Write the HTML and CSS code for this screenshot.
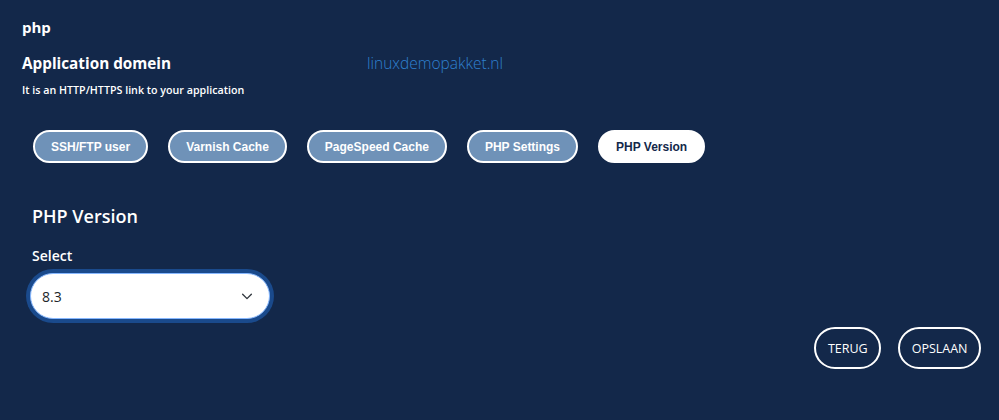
FILE: index.html
```html
<!DOCTYPE html>
<html lang="nl">
<head>
<meta charset="utf-8">
<title>php</title>
<link rel="stylesheet" href="styles.css">
</head>
<body>
<main class="page">
  <h1 class="app-name">php</h1>

  <div class="domain-row">
    <div class="domain-label">
      <h2 class="domain-title">Application domein</h2>
      <p class="domain-hint">It is an HTTP/HTTPS link to your application</p>
    </div>
    <a class="domain-link" href="#">linuxdemopakket.nl</a>
  </div>

  <nav class="tabs">
    <button class="tab">SSH/FTP user</button>
    <button class="tab">Varnish Cache</button>
    <button class="tab">PageSpeed Cache</button>
    <button class="tab">PHP Settings</button>
    <button class="tab tab-active">PHP Version</button>
  </nav>

  <section class="panel">
    <h3 class="panel-title">PHP Version</h3>
    <label class="field-label" for="php-version">Select</label>
    <div class="select-wrap">
      <select id="php-version" class="select">
        <option>8.3</option>
        <option>8.2</option>
        <option>8.1</option>
      </select>
      <svg class="chevron" viewBox="0 0 16 16" width="14" height="14" aria-hidden="true">
        <path d="M3 6l5 5 5-5" fill="none" stroke="#343a40" stroke-width="1.6" stroke-linecap="round" stroke-linejoin="round"/>
      </svg>
    </div>
  </section>

  <div class="actions">
    <button class="btn-outline">TERUG</button>
    <button class="btn-outline">OPSLAAN</button>
  </div>
</main>
</body>
</html>
```

FILE: styles.css
```css
html, body {
  margin: 0;
  padding: 0;
  background: #13284a;
  height: 100%;
}

body {
  font-family: "Open Sans", "Noto Sans", sans-serif;
  color: #ffffff;
}

.page {
  padding: 16px 18px 0 22px;
}

.app-name {
  margin: 0;
  font-size: 15px;
  font-weight: 700;
  line-height: 22px;
}

.domain-row {
  display: flex;
  align-items: flex-start;
  margin-top: 13px;
}

.domain-label {
  width: 345px;
}

.domain-title {
  margin: 0;
  font-size: 15.3px;
  font-weight: 700;
  line-height: 24px;
}

.domain-hint {
  margin: 7px 0 0;
  font-size: 10.7px;
  font-weight: 600;
  line-height: 16px;
}

.domain-link {
  color: #2f80d0;
  text-decoration: none;
  font-size: 15.5px;
  font-weight: 300;
  line-height: 24px;
}

.tabs {
  display: flex;
  gap: 20px;
  margin-top: 32px;
  padding-left: 11px;
}

.tab {
  height: 33px;
  padding: 0 16px;
  border: 2px solid #ffffff;
  border-radius: 17px;
  background: #6f92b8;
  color: #ffffff;
  font-family: "Liberation Sans", Arial, sans-serif;
  font-size: 12px;
  font-weight: 700;
  cursor: pointer;
}

.tab-active {
  background: #ffffff;
  color: #13284a;
}

.panel {
  padding-left: 10px;
  margin-top: 40px;
}

.panel-title {
  margin: 0;
  font-size: 18px;
  font-weight: 600;
  line-height: 26px;
}

.field-label {
  display: block;
  margin-top: 17px;
  font-size: 14px;
  font-weight: 600;
  line-height: 20px;
}

.select-wrap {
  position: relative;
  width: 240px;
  margin-top: 7px;
  margin-left: -2px;
}

.select {
  appearance: none;
  -webkit-appearance: none;
  display: block;
  width: 100%;
  height: 46px;
  padding: 0 36px 0 11px;
  border: 1px solid #86b7fe;
  border-radius: 23px;
  background: #ffffff;
  color: #212529;
  font-family: "Open Sans", "Noto Sans", sans-serif;
  font-size: 14px;
  box-shadow: 0 0 0 4px #1a4a8c;
  outline: none;
}

.chevron {
  position: absolute;
  right: 16px;
  top: 16px;
  pointer-events: none;
}

.actions {
  display: flex;
  justify-content: flex-end;
  gap: 17px;
  margin-top: 8px;
}

.btn-outline {
  height: 42px;
  padding: 0 11.5px;
  border: 2px solid #ffffff;
  border-radius: 21px;
  background: transparent;
  color: #ffffff;
  font-family: "Open Sans", "Noto Sans", sans-serif;
  font-size: 12.5px;
  cursor: pointer;
}
```
